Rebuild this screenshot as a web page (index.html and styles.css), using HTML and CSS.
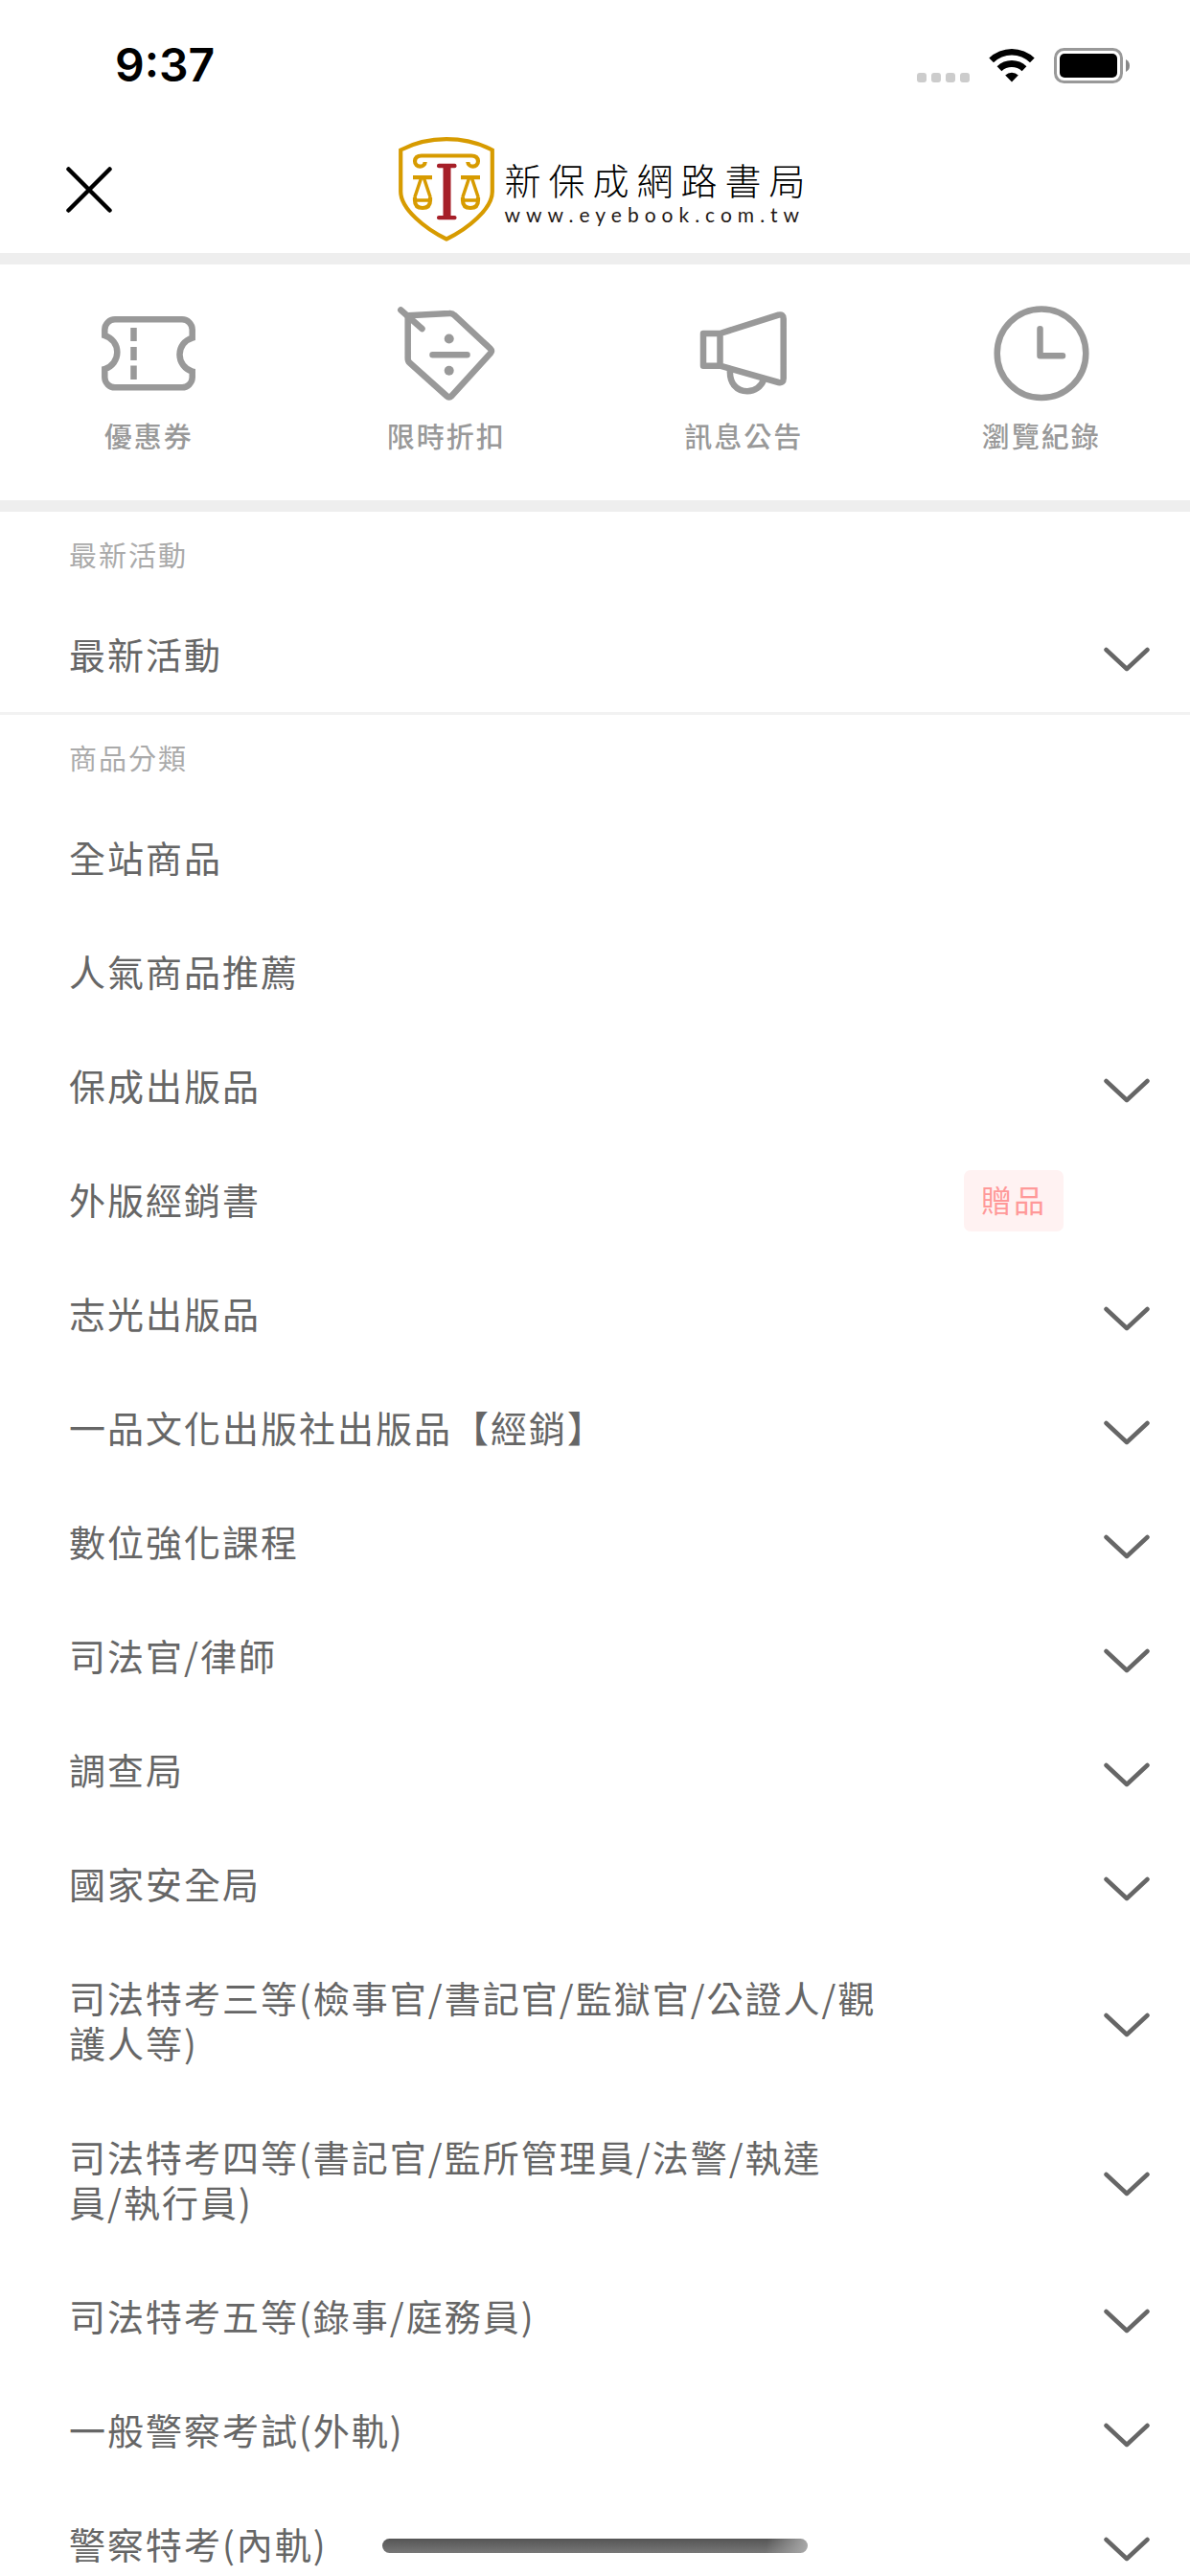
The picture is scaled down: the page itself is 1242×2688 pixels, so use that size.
FILE: index.html
```html
<!doctype html>
<html lang="zh-Hant">
  <head>
    <meta charset="UTF-8" />
    <meta name="viewport" content="width=device-width, initial-scale=1.0" />
    <title>新保成網路書局</title>
    <link rel="stylesheet" href="styles.css">
  </head>
  <body>
    <svg class="sprite" aria-hidden="true">
      <symbol id="chevron" viewBox="0 0 48 38">
        <path d="M2.5 15 L24 35 L45.5 15" fill="none" stroke="currentColor" stroke-width="4.500" stroke-linecap="round" stroke-linejoin="round" />
      </symbol>
    </svg>

    <div class="status-bar">
      <span class="time">9:37</span>
      <div class="status-icons">
        <svg class="signal" width="55" height="37" viewBox="0 0 55 37" aria-hidden="true">
          <rect x="0" y="26" width="10" height="10" rx="3" />
          <rect x="15" y="26" width="10" height="10" rx="3" />
          <rect x="30" y="26" width="10" height="10" rx="3" />
          <rect x="45" y="26" width="10" height="10" rx="3" />
        </svg>
        <svg width="48" height="37" viewBox="0 0 48 37" aria-hidden="true">
          <path d="M0.3 10.5 A34 34 0 0 1 47.7 10.5 L43 15.2 A27 27 0 0 0 5 15.2 Z" />
          <path d="M8.6 19.2 A22 22 0 0 1 39.4 19.2 L34.6 24.2 A15.5 15.5 0 0 0 13.4 24.2 Z" />
          <path d="M17.2 28.4 A10 10 0 0 1 30.8 28.4 L24 35.5 Z" />
        </svg>
        <svg width="80" height="37" viewBox="0 0 80 37" aria-hidden="true">
          <rect x="1.5" y="1.5" width="69" height="34" rx="9" fill="none" stroke="#999" stroke-width="3" />
          <rect x="6" y="6" width="60" height="25" rx="5" />
          <path d="M75 12 Q79 14 79 18.500 Q79 23 75 25 Z" fill="#888" />
        </svg>
      </div>
    </div>

    <header class="header">
      <button class="close-btn" type="button" aria-label="關閉">
        <svg width="48" height="48" viewBox="0 0 48 48">
          <path d="M2.500 2.500 L45.500 45.500 M45.500 2.500 L2.500 45.500" fill="none" stroke="#000" stroke-width="4.500" stroke-linecap="round" />
        </svg>
      </button>
      <a class="logo" href="#">
        <svg width="100" height="110" viewBox="0 0 100 110" aria-hidden="true">
          <g fill="none" stroke="#d79b00" stroke-width="4.200">
            <path d="M2.200 13.500 Q24 2.200 50 2.200 Q76 2.200 97.800 13.500 V57 C97.800 75 72 96 50 106.500 C28 96 2.200 75 2.200 57 Z" />
            <path d="M27.700 26 C27.500 32 17 32.500 17 25 Q17.500 19.500 24 19.500 H76 Q82.500 19.500 83 25 C83 32.500 72.500 32 72.300 26" />
            <path d="M15 42.200 H35 M65 42.200 H85" />
            <path d="M23.500 43 L16.800 63 M26.500 43 L33.200 63 M73.500 43 L66.800 63 M76.500 43 L83.200 63" stroke-width="3.500" />
            <path d="M17 63 V66 Q17 74 25 74 Q33 74 33 66 V63 M67 63 V66 Q67 74 75 74 Q83 74 83 66 V63" />
            <path d="M17 66 H33 M67 66 H83" stroke-width="3.500" />
          </g>
          <g fill="#a61f28">
            <rect x="40" y="27.700" width="20.500" height="4.600" rx="2" />
            <rect x="46.500" y="29" width="8" height="55" />
            <rect x="40" y="82" width="20.500" height="4.200" rx="2" />
          </g>
        </svg>
        <span class="logo-text">
          <span class="logo-name">新保成網路書局</span>
          <span class="logo-url">www.eyebook.com.tw</span>
        </span>
      </a>
    </header>

    <nav class="shortcuts">
      <a class="shortcut" href="#">
        <svg width="104" height="104" viewBox="0 0 104 104" aria-hidden="true">
          <path d="M6.300 33.100 V27 A10.700 10.700 0 0 1 17 16.300 H87 A10.700 10.700 0 0 1 97.700 27 V35.500 A18.200 18.200 0 0 0 97.700 70.500 V77 A10.700 10.700 0 0 1 87 87.300 H17 A10.700 10.700 0 0 1 6.300 77 V68 A18.200 18.200 0 0 0 6.300 33.100 Z" />
          <path d="M36.500 25 V39 M36.500 45 V59 M36.500 64.500 V79" />
        </svg>
        <span>優惠券</span>
      </a>
      <a class="shortcut" href="#">
        <svg width="104" height="104" viewBox="0 0 104 104" aria-hidden="true">
          <path d="M11.700 12.300 L55 10 Q58 9.700 60 11.700 L97.500 46.500 Q100 49 98 51.500 L57.500 96 Q54.700 98.500 52 96 L13.500 61.500 Q11.700 60 11.700 57 Z" />
          <path d="M4.300 6.500 L26.500 26 M37.500 53.300 H73.500" stroke-linecap="round" />
          <circle class="dot" cx="54.700" cy="36.500" r="5" />
          <circle class="dot" cx="54.700" cy="69.800" r="5" />
        </svg>
        <span>限時折扣</span>
      </a>
      <a class="shortcut" href="#">
        <svg width="104" height="104" viewBox="0 0 104 104" aria-hidden="true">
          <path d="M27.500 31 H10 V64.700 H27.500 Z L88.500 11.600 Q93.700 10.500 93.700 15.500 V78 Q93.700 83 88.500 82 L27.500 64.700" stroke-linejoin="round" />
          <path d="M38 69 C37 83 45 91.300 56 91.300 C64 91.300 70.500 86 73 79.500" />
        </svg>
        <span>訊息公告</span>
      </a>
      <a class="shortcut" href="#">
        <svg width="104" height="104" viewBox="0 0 104 104" aria-hidden="true">
          <circle cx="52" cy="51.700" r="46.300" />
          <path d="M50.500 26.300 V54.300 H74" stroke-linecap="round" stroke-linejoin="round" />
        </svg>
        <span>瀏覽紀錄</span>
      </a>
    </nav>

    <main class="menu">
      <section class="menu-section">
        <h2>最新活動</h2>
        <button class="menu-item" type="button"><span class="name">最新活動</span><svg class="chevron"><use href="#chevron" /></svg></button>
      </section>
      <section class="menu-section">
        <h2>商品分類</h2>
        <a class="menu-item" href="#"><span class="name">全站商品</span></a>
        <a class="menu-item" href="#"><span class="name">人氣商品推薦</span></a>
        <button class="menu-item" type="button"><span class="name">保成出版品</span><svg class="chevron"><use href="#chevron" /></svg></button>
        <a class="menu-item" href="#"><span class="name">外版經銷書</span><span class="badge">贈品</span></a>
        <button class="menu-item" type="button"><span class="name">志光出版品</span><svg class="chevron"><use href="#chevron" /></svg></button>
        <button class="menu-item" type="button"><span class="name">一品文化出版社出版品【經銷】</span><svg class="chevron"><use href="#chevron" /></svg></button>
        <button class="menu-item" type="button"><span class="name">數位強化課程</span><svg class="chevron"><use href="#chevron" /></svg></button>
        <button class="menu-item" type="button"><span class="name">司法官/律師</span><svg class="chevron"><use href="#chevron" /></svg></button>
        <button class="menu-item" type="button"><span class="name">調查局</span><svg class="chevron"><use href="#chevron" /></svg></button>
        <button class="menu-item" type="button"><span class="name">國家安全局</span><svg class="chevron"><use href="#chevron" /></svg></button>
        <button class="menu-item" type="button"><span class="name">司法特考三等(檢事官/書記官/監獄官/公證人/觀<br>護人等)</span><svg class="chevron"><use href="#chevron" /></svg></button>
        <button class="menu-item" type="button"><span class="name">司法特考四等(書記官/監所管理員/法警/執達<br>員/執行員)</span><svg class="chevron"><use href="#chevron" /></svg></button>
        <button class="menu-item" type="button"><span class="name">司法特考五等(錄事/庭務員)</span><svg class="chevron"><use href="#chevron" /></svg></button>
        <button class="menu-item" type="button"><span class="name">一般警察考試(外軌)</span><svg class="chevron"><use href="#chevron" /></svg></button>
        <button class="menu-item" type="button"><span class="name">警察特考(內軌)</span><svg class="chevron"><use href="#chevron" /></svg></button>
      </section>
    </main>

    <div class="home-indicator"></div>
  </body>
</html>
```
FILE: styles.css
```css
* {
  box-sizing: border-box;
}
body {
  display: flex;
  flex-direction: column;
  height: 100vh;
  margin: 0;
  overflow: hidden;
  background-color: #fff;
  color: #666;
  font-family: "Noto Sans CJK TC", sans-serif;
}
a {
  color: inherit;
  text-decoration: none;
}
button {
  padding: 0;
  border: none;
  background: none;
  color: inherit;
  font: inherit;
  cursor: pointer;
}
svg {
  display: block;
  flex-shrink: 0;
}
.sprite {
  position: absolute;
  width: 0;
  height: 0;
}

/* status bar */
.status-bar {
  display: flex;
  flex-shrink: 0;
  justify-content: space-between;
  align-items: center;
  height: 132px;
  padding: 4px 62px 0 120px;
}
.time {
  color: #000;
  font-family: Inter, sans-serif;
  font-size: 48px;
  font-weight: 600;
  line-height: 56px;
}
.status-icons {
  display: flex;
  gap: 20px;
}
.signal {
  fill: #ccc;
}

/* header */
.header {
  display: grid;
  flex-shrink: 0;
  grid-template-columns: 1fr auto 1fr;
  align-items: center;
  height: 144px;
  padding: 0 46px 0 69px;
  border-bottom: 12px solid #eee;
}
.close-btn {
  justify-self: start;
}
.logo {
  display: flex;
  align-items: center;
  gap: 10px;
}
.logo-text {
  display: flex;
  flex-direction: column;
  padding-top: 6px;
  color: #000;
}
.logo-name {
  font-size: 38px;
  font-weight: 300;
  line-height: 46px;
  letter-spacing: 8px;
}
.logo-url {
  color: #231815;
  font-family: Lato, sans-serif;
  font-size: 21px;
  line-height: 28px;
  letter-spacing: 6px;
}

/* shortcuts */
.shortcuts {
  display: grid;
  flex-shrink: 0;
  grid-template-columns: repeat(4, 1fr);
  padding: 41px 0 47px;
  border-bottom: 12px solid #eee;
}
.shortcut {
  display: flex;
  flex-direction: column;
  align-items: center;
  gap: 12px;
  color: #999;
  font-size: 29px;
  font-weight: 500;
  line-height: 42px;
  letter-spacing: 2px;
}
.shortcut svg {
  fill: none;
  stroke: #999;
  stroke-width: 6.5;
}
.shortcut .dot {
  fill: #999;
  stroke: none;
}

/* menu */
.menu {
  flex: 1;
  min-height: 0;
  overflow: hidden;
}
.menu-section + .menu-section {
  border-top: 3px solid #f2f2f2;
}
.menu-section h2 {
  margin: 0;
  padding: 23px 72px 25px;
  color: #aaa;
  font-size: 29px;
  font-weight: 400;
  line-height: 42px;
  letter-spacing: 2px;
}
.menu-item {
  display: grid;
  grid-template-columns: 1fr auto 48px;
  column-gap: 42px;
  align-items: center;
  width: 100%;
  min-height: 119px;
  padding: 34px 42px 38px 72px;
  font-size: 38px;
  line-height: 47px;
  letter-spacing: 2px;
  text-align: left;
}
.chevron {
  grid-column: 3;
  width: 48px;
  height: 38px;
}
.badge {
  margin: -7px 0 -11px;
  padding: 6px 18px 10px;
  border-radius: 7px;
  background-color: #fff2f2;
  color: #ff9999;
  font-size: 32px;
  line-height: 48px;
}

.home-indicator {
  position: fixed;
  bottom: 24px;
  left: 50%;
  width: 444px;
  height: 15px;
  border-radius: 8px;
  background: linear-gradient(100deg, transparent 90%, #aaa), linear-gradient(#555, #777);
  transform: translateX(-50%);
}
```
